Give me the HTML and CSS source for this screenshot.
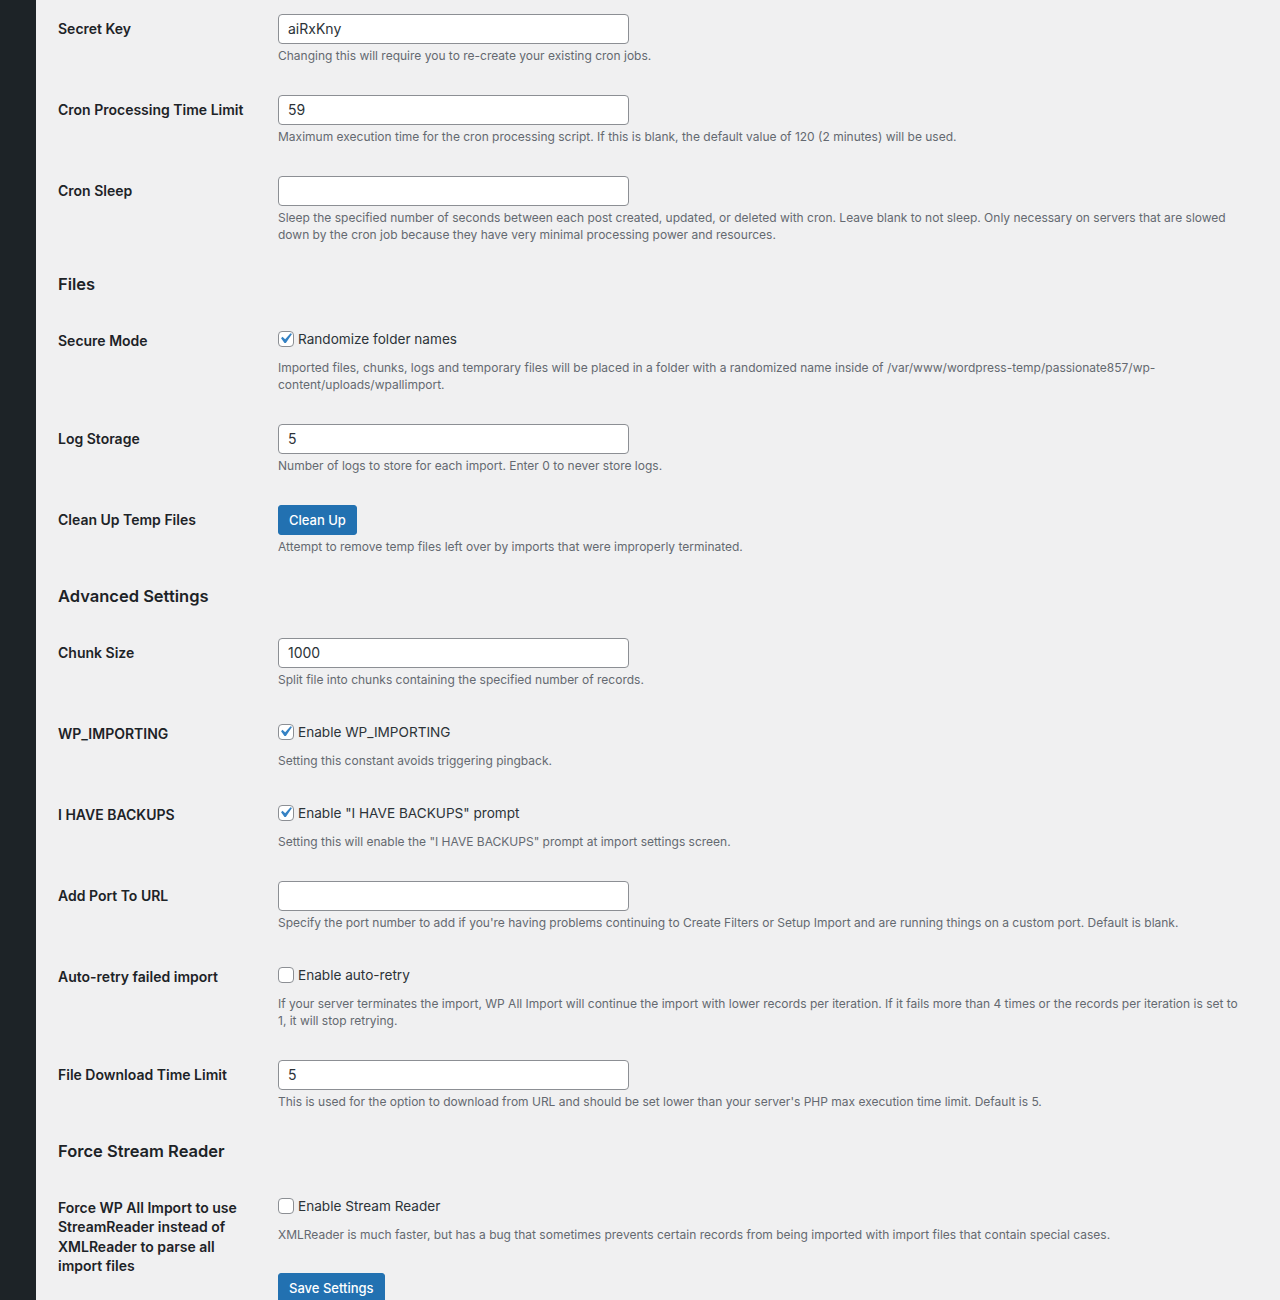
FILE: index.html
```html
<!DOCTYPE html>
<html lang="en">
<head>
<meta charset="utf-8">
<title>Settings</title>
<link rel="stylesheet" href="styles.css">
</head>
<body>
<div class="admin">
  <aside class="sidebar"></aside>
  <main class="content">

    <div class="form-row">
      <div class="th">Secret Key</div>
      <div class="td">
        <div class="text-input">aiRxKny</div>
        <p class="description">Changing this will require you to re-create your existing cron jobs.</p>
      </div>
    </div>

    <div class="form-row">
      <div class="th">Cron Processing Time Limit</div>
      <div class="td">
        <div class="text-input">59</div>
        <p class="description">Maximum execution time for the cron processing script. If this is blank, the default value of 120 (2 minutes) will be used.</p>
      </div>
    </div>

    <div class="form-row">
      <div class="th">Cron Sleep</div>
      <div class="td">
        <div class="text-input"></div>
        <p class="description">Sleep the specified number of seconds between each post created, updated, or deleted with cron. Leave blank to not sleep. Only necessary on servers that are slowed down by the cron job because they have very minimal processing power and resources.</p>
      </div>
    </div>

    <h2 class="section-title">Files</h2>

    <div class="form-row check-row">
      <div class="th">Secure Mode</div>
      <div class="td">
        <label class="check-line"><span class="checkbox checked"><svg viewBox="0 0 20 20" width="21" height="21"><path d="M14.83 4.89l1.34.94-5.81 8.38H9.02L5.78 9.67l1.34-1.25 2.570 2.4z"/></svg></span>Randomize folder names</label>
        <p class="description check-desc">Imported files, chunks, logs and temporary files will be placed in a folder with a randomized name inside of /var/www/wordpress-temp/passionate857/wp-content/uploads/wpallimport.</p>
      </div>
    </div>

    <div class="form-row">
      <div class="th">Log Storage</div>
      <div class="td">
        <div class="text-input">5</div>
        <p class="description">Number of logs to store for each import. Enter 0 to never store logs.</p>
      </div>
    </div>

    <div class="form-row">
      <div class="th">Clean Up Temp Files</div>
      <div class="td">
        <span class="button">Clean Up</span>
        <p class="description">Attempt to remove temp files left over by imports that were improperly terminated.</p>
      </div>
    </div>

    <h2 class="section-title">Advanced Settings</h2>

    <div class="form-row">
      <div class="th">Chunk Size</div>
      <div class="td">
        <div class="text-input">1000</div>
        <p class="description">Split file into chunks containing the specified number of records.</p>
      </div>
    </div>

    <div class="form-row check-row">
      <div class="th">WP_IMPORTING</div>
      <div class="td">
        <label class="check-line"><span class="checkbox checked"><svg viewBox="0 0 20 20" width="21" height="21"><path d="M14.83 4.89l1.34.94-5.81 8.38H9.02L5.78 9.67l1.34-1.25 2.57 2.4z"/></svg></span>Enable WP_IMPORTING</label>
        <p class="description check-desc">Setting this constant avoids triggering pingback.</p>
      </div>
    </div>

    <div class="form-row check-row">
      <div class="th">I HAVE BACKUPS</div>
      <div class="td">
        <label class="check-line"><span class="checkbox checked"><svg viewBox="0 0 20 20" width="21" height="21"><path d="M14.83 4.89l1.34.94-5.81 8.38H9.02L5.78 9.67l1.34-1.25 2.57 2.4z"/></svg></span>Enable "I HAVE BACKUPS" prompt</label>
        <p class="description check-desc">Setting this will enable the "I HAVE BACKUPS" prompt at import settings screen.</p>
      </div>
    </div>

    <div class="form-row">
      <div class="th">Add Port To URL</div>
      <div class="td">
        <div class="text-input"></div>
        <p class="description">Specify the port number to add if you're having problems continuing to Create Filters or Setup Import and are running things on a custom port. Default is blank.</p>
      </div>
    </div>

    <div class="form-row check-row">
      <div class="th">Auto-retry failed import</div>
      <div class="td">
        <label class="check-line"><span class="checkbox"></span>Enable auto-retry</label>
        <p class="description check-desc">If your server terminates the import, WP All Import will continue the import with lower records per iteration. If it fails more than 4 times or the records per iteration is set to 1, it will stop retrying.</p>
      </div>
    </div>

    <div class="form-row">
      <div class="th">File Download Time Limit</div>
      <div class="td">
        <div class="text-input">5</div>
        <p class="description">This is used for the option to download from URL and should be set lower than your server's PHP max execution time limit. Default is 5.</p>
      </div>
    </div>

    <h2 class="section-title">Force Stream Reader</h2>

    <div class="form-row check-row">
      <div class="th">Force WP All Import to use StreamReader instead of XMLReader to parse all import files</div>
      <div class="td">
        <label class="check-line"><span class="checkbox"></span>Enable Stream Reader</label>
        <p class="description check-desc">XMLReader is much faster, but has a bug that sometimes prevents certain records from being imported with import files that contain special cases.</p>
        <div class="submit-row"><span class="button">Save Settings</span></div>
      </div>
    </div>

  </main>
</div>
</body>
</html>
```

FILE: styles.css
```css
html, body {
  margin: 0;
  padding: 0;
  background: #f0f0f1;
}

body {
  font-family: Inter, "Open Sans", "Liberation Sans", sans-serif;
  color: #1d2327;
  font-size: 14px;
}

.admin {
  display: flex;
  min-height: 1300px;
}

.sidebar {
  width: 36px;
  flex: 0 0 36px;
  background: #1d2327;
}

.content {
  flex: 1;
  min-width: 0;
  padding: 0 28px 0 22px;
}

/* settings table rows */
.form-row {
  display: flex;
}

.th {
  width: 200px;
  flex: 0 0 200px;
  padding: 19px 10px 20px 0;
  font-size: 14px;
  font-weight: 600;
  line-height: 19.3px;
  color: #1d2327;
}

.td {
  flex: 1;
  min-width: 0;
  padding: 14px 10px 17px;
}

.text-input {
  box-sizing: border-box;
  width: 351px;
  height: 30px;
  background: #fff;
  border: 1px solid #8c8f94;
  border-radius: 4px;
  padding: 0 9px;
  font-size: 14px;
  line-height: 28px;
  color: #2c3338;
}

.description {
  margin: 3px 0 0;
  font-size: 12px;
  line-height: 17px;
  color: #646970;
}

/* checkbox with its label */
.check-line {
  display: flex;
  align-items: center;
  height: 26px;
  font-size: 13.6px;
  color: #2c3338;
}

.check-desc {
  margin-top: 7px;
}

.checkbox {
  position: relative;
  box-sizing: border-box;
  width: 16px;
  height: 16px;
  flex: 0 0 16px;
  margin-right: 4px;
  background: #fff;
  border: 1px solid #8c8f94;
  border-radius: 4px;
}

.checkbox svg {
  position: absolute;
  left: -4px;
  top: -4px;
  fill: #3582c4;
}

.button {
  display: inline-block;
  box-sizing: border-box;
  height: 30px;
  padding: 0 10px;
  background: #2271b1;
  border: 1px solid #2271b1;
  border-radius: 3px;
  color: #fff;
  font-size: 13px;
  line-height: 28px;
  font-weight: 500;
}

.submit-row {
  margin-top: 30px;
}

.section-title {
  margin: 0;
  padding: 14px 0 18px;
  font-size: 16.5px;
  line-height: 20px;
  font-weight: 600;
  color: #1d2327;
}
```
